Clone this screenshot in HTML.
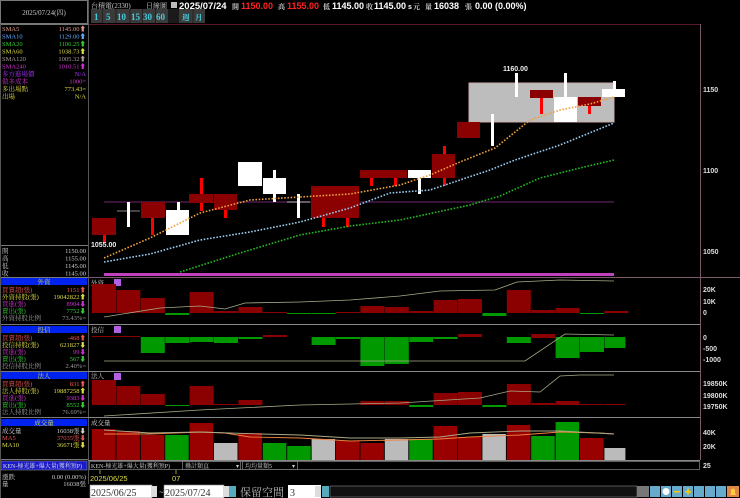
<!DOCTYPE html>
<html><head><meta charset="utf-8"><style>
html,body{margin:0;padding:0;background:#000;width:740px;height:498px;overflow:hidden}
svg{display:block;font-family:"Liberation Sans","Noto Sans CJK TC",sans-serif}
.s{font-family:"Liberation Serif","Noto Serif CJK SC","Noto Sans CJK TC",serif}
</style></head><body>
<svg width="740" height="498" viewBox="0 0 740 498" xmlns="http://www.w3.org/2000/svg">
<rect width="740" height="498" fill="#000"/>
<rect x="0.5" y="0.5" width="87" height="23" fill="#000" stroke="#777"/>
<text x="44" y="15" font-size="7" fill="#ccc" text-anchor="middle" class="s">2025/07/24(四)</text>
<g font-size="7" class="s" fill="#ccc">
<text x="91" y="8">台積電(2330)</text>
<text x="146" y="8">日線圖</text>
</g>
<rect x="171" y="2" width="6" height="6" fill="#bbb"/>
<g font-size="9" font-weight="bold">
<text x="179" y="9" fill="#fff" font-size="9.5">2025/07/24</text>
<text x="232" y="9" fill="#ccc" font-size="7" class="s">開</text>
<text x="241" y="9" fill="#f22">1150.00</text>
<text x="278" y="9" fill="#ccc" font-size="7" class="s">高</text>
<text x="287" y="9" fill="#f22">1155.00</text>
<text x="323" y="9" fill="#ccc" font-size="7" class="s">低</text>
<text x="332" y="9" fill="#fff">1145.00</text>
<text x="366" y="9" fill="#ccc" font-size="7" class="s">收</text>
<text x="374" y="9" fill="#fff">1145.00</text>
<text x="408" y="9" fill="#fff" font-size="7">s</text>
<text x="413" y="9" fill="#ccc" font-size="7" class="s">元</text>
<text x="425" y="9" fill="#ccc" font-size="7" class="s">量</text>
<text x="434" y="9" fill="#fff">16038</text>
<text x="465" y="9" fill="#ccc" font-size="7" class="s">張</text>
<text x="475" y="9" fill="#fff">0.00 (0.00%)</text>
</g>
<g font-size="9" fill="#4cd" class="s" font-weight="bold">
<rect x="91" y="9" width="114" height="14" fill="#3a3a3a"/>
<rect x="168" y="9" width="11" height="14" fill="#1a1a1a"/>
<g stroke="#222"><line x1="102.5" y1="9" x2="102.5" y2="23"/><line x1="116" y1="9" x2="116" y2="23"/><line x1="130" y1="9" x2="130" y2="23"/><line x1="142.5" y1="9" x2="142.5" y2="23"/><line x1="155.5" y1="9" x2="155.5" y2="23"/><line x1="193" y1="9" x2="193" y2="23"/></g>
<text x="94" y="20">1</text><text x="106" y="20">5</text><text x="117" y="20">10</text><text x="131" y="20">15</text><text x="143" y="20">30</text><text x="156" y="20">60</text>
<text x="182" y="20" font-size="7.5">週</text><text x="195" y="20" font-size="7.5">月</text>
</g>
<line x1="88" y1="24.5" x2="700" y2="24.5" stroke="#5a1a2a"/>
<line x1="88.5" y1="0" x2="88.5" y2="498" stroke="#555"/>
<line x1="700.5" y1="24" x2="700.5" y2="460" stroke="#7a5a6a"/>
<g font-size="6.5" class="s">
<line x1="0" y1="24.5" x2="88" y2="24.5" stroke="#777"/>
<text x="2" y="31" fill="#d98">SMA5</text><text x="86" y="31" fill="#d98" text-anchor="end">1145.00⬆</text>
<text x="2" y="38.5" fill="#6af">SMA10</text><text x="86" y="38.5" fill="#6af" text-anchor="end">1129.00⬆</text>
<text x="2" y="46" fill="#3c3">SMA20</text><text x="86" y="46" fill="#3c3" text-anchor="end">1106.25⬆</text>
<text x="2" y="53.5" fill="#dd4">SMA60</text><text x="86" y="53.5" fill="#dd4" text-anchor="end">1038.73⬆</text>
<text x="2" y="61" fill="#a99">SMA120</text><text x="86" y="61" fill="#a99" text-anchor="end">1005.32⬆</text>
<text x="2" y="68.5" fill="#c3c">SMA240</text><text x="86" y="68.5" fill="#c3c" text-anchor="end">1010.51⬆</text>
<text x="2" y="76" fill="#a3f">多方進場價</text><text x="86" y="76" fill="#a3f" text-anchor="end">N/A</text>
<text x="2" y="83.5" fill="#c3c">做多成本</text><text x="86" y="83.5" fill="#c3c" text-anchor="end">1000=</text>
<text x="2" y="91" fill="#dd4">多出場點</text><text x="86" y="91" fill="#dd4" text-anchor="end">773.43=</text>
<text x="2" y="98.5" fill="#dd4">出場</text><text x="86" y="98.5" fill="#dd4" text-anchor="end">N/A</text>
<line x1="0" y1="245.5" x2="88" y2="245.5" stroke="#777"/>
<g fill="#ccc">
<text x="2" y="253">開</text><text x="86" y="253" text-anchor="end">1150.00</text>
<text x="2" y="260.5">高</text><text x="86" y="260.5" text-anchor="end">1155.00</text>
<text x="2" y="268">低</text><text x="86" y="268" text-anchor="end">1145.00</text>
<text x="2" y="275.5">收</text><text x="86" y="275.5" text-anchor="end">1145.00</text>
</g>
<rect x="1" y="278" width="86" height="7" fill="#0022ee"/><text x="44" y="284" fill="#dd4" text-anchor="middle">外資</text>
<text x="2" y="292" fill="#e55">買賣超(張)</text><text x="86" y="292" fill="#e55" text-anchor="end">1151⬆</text>
<text x="2" y="299" fill="#dd4">外資持股(張)</text><text x="86" y="299" fill="#dd4" text-anchor="end">19042822⬆</text>
<text x="2" y="306" fill="#c3c">買進(張)</text><text x="86" y="306" fill="#c3c" text-anchor="end">8904⬇</text>
<text x="2" y="313" fill="#3c3">賣出(張)</text><text x="86" y="313" fill="#3c3" text-anchor="end">7752⬇</text>
<text x="2" y="320" fill="#999">外資持股比例</text><text x="86" y="320" fill="#999" text-anchor="end">73.43%=</text>
<rect x="1" y="326" width="86" height="7" fill="#0022ee"/><text x="44" y="332" fill="#dd4" text-anchor="middle">投信</text>
<text x="2" y="340" fill="#e55">買賣超(張)</text><text x="86" y="340" fill="#e55" text-anchor="end">-468⬆</text>
<text x="2" y="347" fill="#dd4">投信持股(張)</text><text x="86" y="347" fill="#dd4" text-anchor="end">621827⬇</text>
<text x="2" y="354" fill="#c3c">買進(張)</text><text x="86" y="354" fill="#c3c" text-anchor="end">99⬇</text>
<text x="2" y="361" fill="#3c3">賣出(張)</text><text x="86" y="361" fill="#3c3" text-anchor="end">567⬇</text>
<text x="2" y="368" fill="#999">投信持股比例</text><text x="86" y="368" fill="#999" text-anchor="end">2.40%=</text>
<rect x="1" y="372" width="86" height="7" fill="#0022ee"/><text x="44" y="378" fill="#dd4" text-anchor="middle">法人</text>
<text x="2" y="386" fill="#e55">買賣超(張)</text><text x="86" y="386" fill="#e55" text-anchor="end">831⬆</text>
<text x="2" y="393" fill="#dd4">法人持股(張)</text><text x="86" y="393" fill="#dd4" text-anchor="end">19887258⬆</text>
<text x="2" y="400" fill="#c3c">買進(張)</text><text x="86" y="400" fill="#c3c" text-anchor="end">9383⬇</text>
<text x="2" y="407" fill="#3c3">賣出(張)</text><text x="86" y="407" fill="#3c3" text-anchor="end">8552⬇</text>
<text x="2" y="414" fill="#999">法人持股比例</text><text x="86" y="414" fill="#999" text-anchor="end">76.69%=</text>
<rect x="1" y="419" width="86" height="7" fill="#0022ee"/><text x="44" y="425" fill="#dd4" text-anchor="middle">成交量</text>
<text x="2" y="433" fill="#ccc">成交量</text><text x="86" y="433" fill="#ccc" text-anchor="end">16038張⬇</text>
<text x="2" y="440" fill="#d55">MA5</text><text x="86" y="440" fill="#d55" text-anchor="end">37035張⬇</text>
<text x="2" y="447" fill="#dd4">MA10</text><text x="86" y="447" fill="#dd4" text-anchor="end">36671張⬇</text>
<g stroke="#777"><line x1="0" y1="277.5" x2="88" y2="277.5"/><line x1="0" y1="324.5" x2="88" y2="324.5"/><line x1="0" y1="371.5" x2="88" y2="371.5"/><line x1="0" y1="417.5" x2="88" y2="417.5"/><line x1="0" y1="459.5" x2="88" y2="459.5"/></g>
<rect x="1" y="461" width="86" height="9" fill="#1a1acc" stroke="#888" stroke-width="0.6"/>
<text x="3" y="468" fill="#ddd" font-size="6">KEN-極光雄+爆大量(獲利預P)</text>
<text x="2" y="479" fill="#ccc">漲跌</text><text x="86" y="479" fill="#ccc" text-anchor="end">0.00 (0.00%)</text>
<text x="2" y="486" fill="#ccc">量</text><text x="86" y="486" fill="#ccc" text-anchor="end">16038張</text>
</g>
<line x1="0.5" y1="24" x2="0.5" y2="498" stroke="#555"/>

<rect x="469" y="83" width="145" height="39" fill="#bdbdbd" stroke="#caa"/>
<line x1="104" y1="202" x2="614" y2="202" stroke="#4a1a4a" stroke-width="1.5"/>
<g>
<rect x="103" y="235" width="3" height="8" fill="#f00"/><rect x="92" y="218" width="24" height="17" fill="#8b0000"/>
<line x1="117" y1="211" x2="140" y2="211" stroke="#888"/><rect x="127" y="202" width="3" height="25" fill="#fff"/>
<rect x="151" y="218" width="3" height="17" fill="#f00"/><rect x="141" y="202" width="24" height="16" fill="#8b0000"/>
<rect x="177" y="202" width="3" height="8" fill="#fff"/><rect x="166" y="210" width="23" height="25" fill="#fff"/>
<rect x="200" y="178" width="3" height="33" fill="#f00"/><rect x="189" y="194" width="24" height="9" fill="#8b0000"/>
<rect x="224" y="210" width="3" height="8" fill="#f00"/><rect x="214" y="194" width="23" height="16" fill="#8b0000"/>
<rect x="238" y="162" width="24" height="24" fill="#fff"/>
<rect x="273" y="170" width="3" height="32" fill="#fff"/><rect x="263" y="178" width="23" height="16" fill="#fff"/>
<line x1="287" y1="202" x2="310" y2="202" stroke="#aaa"/><rect x="297" y="194" width="3" height="24" fill="#fff"/>
<rect x="322" y="216" width="3" height="11" fill="#f00"/><rect x="311" y="186" width="24" height="32" fill="#8b0000"/>
<rect x="346" y="216" width="3" height="11" fill="#f00"/><rect x="335" y="186" width="24" height="32" fill="#8b0000"/>
<rect x="370" y="176" width="3" height="10" fill="#f00"/><rect x="394" y="176" width="3" height="10" fill="#f00"/><rect x="360" y="170" width="47" height="8" fill="#8b0000"/>
<rect x="418" y="176" width="3" height="18" fill="#fff"/><rect x="408" y="170" width="23" height="8" fill="#fff"/>
<rect x="443" y="146" width="3" height="40" fill="#f00"/><rect x="432" y="154" width="23" height="24" fill="#8b0000"/>
<rect x="457" y="122" width="23" height="16" fill="#8b0000"/>
<rect x="491" y="114" width="3" height="32" fill="#fff"/>
<rect x="515" y="73" width="3" height="24" fill="#fff"/>
<rect x="540" y="96" width="3" height="18" fill="#f00"/><rect x="530" y="90" width="23" height="8" fill="#8b0000"/>
<rect x="564" y="73" width="3" height="26" fill="#fff"/><rect x="554" y="97" width="23" height="25" fill="#fff"/>
<rect x="588" y="104" width="3" height="10" fill="#f00"/><rect x="578" y="97" width="23" height="9" fill="#8b0000"/>
<rect x="613" y="81" width="3" height="9" fill="#fff"/><rect x="602" y="89" width="23" height="8" fill="#fff"/>
</g>
<g fill="none" stroke-width="1.6" stroke-dasharray="1.6 1.6">
<polyline stroke="#f0a040" points="104,258 150,238 200,213 250,200 300,197 350,194 400,185 430,175 460,162 495,148 530,120 560,110 590,104 614,97"/>
<polyline stroke="#9ce" points="104,262 150,254 200,240 250,232 300,222 350,208 390,193 430,190 490,170 515,160 560,145 614,123"/>
<polyline stroke="#2b2" points="180,272 240,253 300,235 350,226 400,220 470,205 500,196 540,178 580,168 614,160"/>
</g>
<text x="91" y="247" fill="#eee" font-size="7" font-weight="bold">1055.00</text>
<text x="503" y="71" fill="#eee" font-size="7" font-weight="bold">1160.00</text>
<rect x="104" y="273" width="510" height="3" fill="#c040c0"/>
<g font-size="7" fill="#ddd" font-weight="bold"><text x="703" y="92">1150</text><text x="703" y="173">1100</text><text x="703" y="254">1050</text></g>

<g stroke="#888"><line x1="88" y1="277.5" x2="740" y2="277.5" stroke="#7a5a6a"/><line x1="88" y1="324.5" x2="700" y2="324.5"/><line x1="88" y1="371.5" x2="700" y2="371.5"/><line x1="88" y1="417.5" x2="700" y2="417.5"/><line x1="88" y1="460.5" x2="700" y2="460.5"/></g>
<g font-size="6.5" fill="#ccc" class="s"><text x="91" y="285">外資</text><text x="91" y="332">投信</text><text x="91" y="378">法人</text><text x="91" y="425">成交量</text></g>
<g fill="#b060e0"><rect x="114" y="279" width="7" height="7"/><rect x="114" y="326" width="7" height="7"/><rect x="114" y="373" width="7" height="7"/></g>

<g fill="#8b0000">
<rect x="92" y="284" width="24" height="29"/><rect x="116.4" y="290" width="24" height="23"/><rect x="140.8" y="298" width="24" height="15"/>
<rect x="189.6" y="292" width="24" height="21"/><rect x="214" y="311" width="24" height="2"/><rect x="238.4" y="307" width="24" height="6"/>
<rect x="262.8" y="312" width="24" height="1"/><rect x="336" y="312" width="24" height="1"/><rect x="360.4" y="306" width="24" height="7"/><rect x="384.8" y="307" width="24" height="6"/><rect x="409.2" y="311" width="24" height="2"/>
<rect x="433.6" y="300" width="24" height="13"/><rect x="458" y="299" width="24" height="14"/><rect x="506.8" y="290" width="24" height="23"/><rect x="531.2" y="310" width="24" height="3"/><rect x="555.6" y="308" width="24" height="5"/><rect x="604.4" y="311" width="24" height="2"/>
</g>
<g fill="#090">
<rect x="165.2" y="313" width="24" height="2"/><rect x="287.2" y="313" width="24" height="1"/><rect x="311.6" y="313" width="24" height="1"/><rect x="482.4" y="313" width="24" height="3"/><rect x="580" y="313" width="24" height="1"/>
</g>
<polyline fill="none" stroke="#aa8" stroke-width="0.8" points="104,317 160,308 200,306 225,309 245,303 300,302 350,300 400,296 440,291 495,290 517,282 560,280 614,281"/>
<g font-size="7" fill="#ddd" font-weight="bold"><text x="703" y="292">20K</text><text x="703" y="304">10K</text><text x="703" y="315">0</text></g>

<g fill="#8b0000"><rect x="92" y="336" width="48" height="1"/><rect x="262.8" y="335" width="24" height="2"/><rect x="458" y="334" width="24" height="3"/><rect x="531.2" y="334" width="24" height="4"/></g>
<g fill="#090">
<rect x="140.8" y="337" width="24" height="16"/><rect x="165.2" y="337" width="24" height="6"/><rect x="189.6" y="337" width="24" height="5"/><rect x="214" y="337" width="24" height="6"/><rect x="238.4" y="337" width="24" height="2"/>
<rect x="311.6" y="337" width="24" height="8"/><rect x="336" y="337" width="24" height="2"/><rect x="360.4" y="337" width="24" height="29"/><rect x="384.8" y="337" width="24" height="27"/><rect x="409.2" y="337" width="24" height="5"/>
<rect x="433.6" y="337" width="24" height="2"/><rect x="506.8" y="337" width="24" height="6"/><rect x="555.6" y="337" width="24" height="21"/><rect x="580" y="337" width="24" height="15"/><rect x="604.4" y="337" width="21" height="11"/>
</g>
<polyline fill="none" stroke="#aa8" stroke-width="0.8" points="104,361 525,361 565,334 614,335"/>
<g font-size="7" fill="#ddd" font-weight="bold"><text x="703" y="340">0</text><text x="703" y="351">-500</text><text x="703" y="362">-1000</text></g>

<g fill="#8b0000">
<rect x="92" y="380" width="24" height="25"/><rect x="116.4" y="386" width="24" height="19"/><rect x="140.8" y="394" width="24" height="11"/><rect x="189.6" y="386" width="24" height="19"/><rect x="214" y="404" width="24" height="1"/><rect x="238.4" y="400" width="24" height="5"/>
<rect x="360.4" y="401" width="24" height="4"/><rect x="384.8" y="401" width="24" height="4"/><rect x="433.6" y="393" width="24" height="12"/><rect x="458" y="392" width="24" height="13"/><rect x="506.8" y="384" width="24" height="21"/><rect x="531.2" y="403" width="24" height="2"/><rect x="555.6" y="401" width="24" height="4"/><rect x="580" y="404" width="24" height="1"/><rect x="604.4" y="404" width="21" height="1"/>
</g>
<g fill="#090"><rect x="165.2" y="405" width="24" height="1"/><rect x="409.2" y="405" width="24" height="2"/><rect x="482.4" y="405" width="24" height="2"/></g>
<polyline fill="none" stroke="#aa8" stroke-width="0.8" points="104,416 200,410 300,405 400,403 480,398 510,391 540,392 560,376 580,375 614,375"/>
<g font-size="7" fill="#ddd" font-weight="bold"><text x="703" y="386">19850K</text><text x="703" y="398">19800K</text><text x="703" y="409">19750K</text></g>

<g>
<rect x="92" y="429" width="23.5" height="31" fill="#990000"/><rect x="116.4" y="431" width="23.5" height="29" fill="#990000"/><rect x="140.8" y="435" width="23.5" height="25" fill="#990000"/>
<rect x="165.2" y="435" width="23.5" height="25" fill="#090"/><rect x="189.6" y="423" width="23.5" height="37" fill="#990000"/><rect x="214" y="443" width="23.5" height="17" fill="#bbb"/>
<rect x="238.4" y="433" width="23.5" height="27" fill="#990000"/><rect x="262.8" y="443" width="23.5" height="17" fill="#090"/><rect x="287.2" y="446" width="23.5" height="14" fill="#090"/>
<rect x="311.6" y="439" width="23.5" height="21" fill="#bbb"/><rect x="336" y="441" width="23.5" height="19" fill="#990000"/><rect x="360.4" y="443" width="23.5" height="17" fill="#990000"/>
<rect x="384.8" y="439" width="23.5" height="21" fill="#bbb"/><rect x="409.2" y="439" width="23.5" height="21" fill="#090"/><rect x="433.6" y="426" width="23.5" height="34" fill="#990000"/>
<rect x="458" y="437" width="23.5" height="23" fill="#990000"/><rect x="482.4" y="434" width="23.5" height="26" fill="#bbb"/><rect x="506.8" y="425" width="23.5" height="35" fill="#990000"/>
<rect x="531.2" y="436" width="23.5" height="24" fill="#090"/><rect x="555.6" y="422" width="23.5" height="38" fill="#090"/><rect x="580" y="438" width="23.5" height="22" fill="#990000"/>
<rect x="604.4" y="448" width="21" height="12" fill="#bbb"/>
</g>
<polyline fill="none" stroke="#f08040" stroke-width="0.9" points="104,434 150,434 200,432 225,433 250,437 300,438 350,441 400,440 440,439 470,437 520,435 560,432 600,433 614,434"/>
<polyline fill="none" stroke="#aa8" stroke-width="0.9" points="104,430 150,433 200,432 260,434 300,435 350,438 400,438 440,437 470,433 520,431 560,431 614,434"/>
<g font-size="7" fill="#ddd" font-weight="bold"><text x="703" y="435">40K</text><text x="703" y="449">20K</text><text x="703" y="468">25</text></g>

<g font-size="6" class="s" fill="#ccc">
<rect x="89.5" y="461.5" width="610" height="8" fill="#000" stroke="#888" stroke-width="0.7"/>
<text x="91" y="468">KEN-極光雄+爆大量(獲利預P)</text>
<rect x="182.5" y="461.5" width="58" height="8" fill="#000" stroke="#888" stroke-width="0.7"/><text x="185" y="468">疊計類直</text><text x="236" y="468">▾</text>
<rect x="242.5" y="461.5" width="55" height="8" fill="#000" stroke="#888" stroke-width="0.7"/><text x="245" y="468">均均量類5</text><text x="292" y="468">▾</text>
</g>
<g stroke="#dd4" stroke-width="0.7"><line x1="100" y1="470" x2="100" y2="474"/><line x1="176" y1="470" x2="176" y2="474"/></g>
<text x="90" y="481" font-size="7.5" fill="#dd4">2025/06/25</text>
<text x="172" y="481" font-size="7.5" fill="#dd4">07</text>

<rect x="88" y="484" width="652" height="14" fill="#000"/>
<rect x="90" y="485" width="62" height="13" fill="#fff" stroke="#888" stroke-width="0.6"/>
<text x="91" y="496" font-size="10" fill="#333" class="s">2025/06/25</text>
<rect x="152" y="486" width="5" height="11" fill="#ddd"/>
<text x="159" y="495" font-size="8" fill="#ccc">~</text>
<rect x="164" y="485" width="60" height="13" fill="#fff" stroke="#888" stroke-width="0.6"/>
<text x="165" y="496" font-size="10" fill="#333" class="s">2025/07/24</text>
<rect x="224" y="486" width="5" height="11" fill="#ddd"/>
<rect x="229" y="486" width="7" height="11" fill="#5ab"/>
<text x="240" y="496" font-size="11" fill="#bbb" class="s">保留空間</text>
<rect x="288" y="485" width="33" height="13" fill="#fff"/>
<text x="290" y="496" font-size="10" fill="#333" class="s">3</text>
<rect x="315" y="486" width="6" height="11" fill="#ddd"/>
<rect x="322" y="486" width="7" height="11" fill="#5ab"/>
<rect x="330" y="486" width="307" height="11" fill="#111" stroke="#888" stroke-width="0.6"/>
<rect x="637" y="486" width="12" height="11" fill="#777"/>
<g>
<rect x="650" y="486" width="10" height="11" fill="#6ac"/><rect x="661" y="486" width="10" height="11" fill="#6ac"/><circle cx="666" cy="491.5" r="3.5" fill="#fff"/>
<rect x="672" y="486" width="10" height="11" fill="#6ac"/><rect x="674" y="491" width="6" height="1.5" fill="#fc0"/>
<rect x="683" y="486" width="10" height="11" fill="#6ac"/><rect x="685" y="491" width="6" height="1.5" fill="#fc0"/><rect x="687.3" y="488.5" width="1.5" height="6" fill="#fc0"/>
<rect x="694" y="486" width="10" height="11" fill="#6ac"/><rect x="705" y="486" width="10" height="11" fill="#6ac"/><rect x="716" y="486" width="10" height="11" fill="#6ac"/>
<rect x="727" y="486" width="12" height="11" fill="#d84"/><path d="M730 495 L736 495 L735 493 L735 490 Q733 487 731 490 L731 493 Z" fill="#fc4"/>
</g>
</svg>
</body></html>
